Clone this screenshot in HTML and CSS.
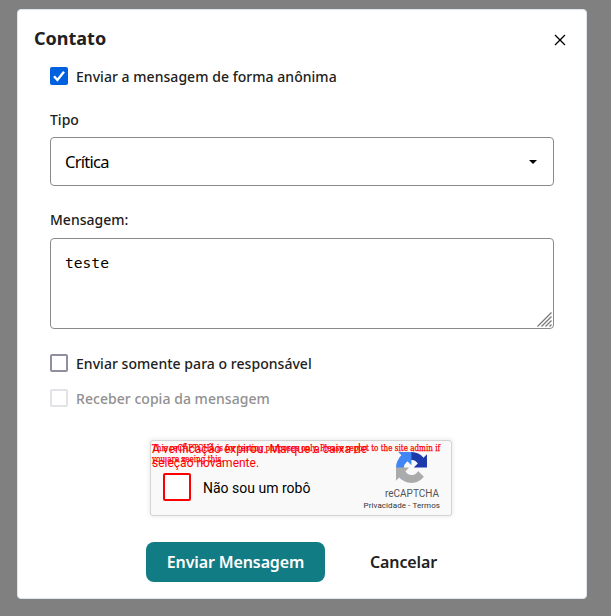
FILE: index.html
```html
<!DOCTYPE html>
<html lang="pt-BR">
<head>
<meta charset="utf-8">
<title>Contato</title>
<link rel="stylesheet" href="styles.css">
</head>
<body>
<main class="modal">
  <header class="head">
    <h1>Contato</h1>
    <button class="close" aria-label="Fechar"><svg width="12" height="12" viewBox="0 0 12 12"><path d="M1 1l10 10M11 1L1 11" stroke="#000" stroke-width="1.4"/></svg></button>
  </header>
  <form class="form">
    <label class="check anon"><span class="box on"><svg width="18" height="18" viewBox="0 0 18 18"><path d="M4 9.300l3.400 3.700L14 4.700" fill="none" stroke="#fff" stroke-width="2.4"/></svg></span><span class="text">Enviar a mensagem de forma anônima</span></label>
    <div class="label tipo">Tipo</div>
    <div class="select"><span>Crítica</span><svg width="8" height="4" viewBox="0 0 8 4"><path d="M0 0h8L4 4z"/></svg></div>
    <div class="label msg">Mensagem:</div>
    <div class="area">teste<svg class="grip" width="15" height="15" viewBox="0 0 15 15"><path d="M.5 14.500l14-14M4.500 14.500l10-10M8.500 14.500l6-6M12.500 14.500l2-2" stroke="#777" stroke-width="1.3"/></svg></div>
    <label class="check resp"><span class="box"></span><span class="text">Enviar somente para o responsável</span></label>
    <label class="check copy"><span class="box"></span><span class="text">Receber copia da mensagem</span></label>
  </form>
  <section class="captcha">
    <div class="testing">This reCAPTCHA is for testing purposes only. Please report to the site admin if<br>you are seeing this.</div>
    <div class="expired">A verificação expirou. Marque a caixa de<br>seleção novamente.</div>
    <div class="robot"><span class="rbox"></span><span class="rtext">Não sou um robô</span></div>
    <div class="brand">
      <svg width="31" height="31" viewBox="0 0 64 64"><path fill="#1c3aa9" d="M64 31.955l-.033-1.370V4.687l-7.160 7.160C50.948 4.674 42.033.093 32.050.093c-10.389 0-19.622 4.960-25.458 12.640l11.736 11.860a15.550 15.550 0 0 1 4.754-5.334c2.050-1.600 4.952-2.906 8.968-2.906.485 0 .86.057 1.135.163 4.976.393 9.288 3.140 11.828 7.124l-8.307 8.307z"/><path fill="#4285f4" d="M31.862.094H4.594l7.160 7.160C4.580 13.147 0 22.060 0 32.046c0 10.388 4.960 19.622 12.640 25.458L24.500 45.768a15.550 15.550 0 0 1-5.334-4.754c-1.600-2.050-2.906-4.952-2.906-8.968 0-.485.057-.86.163-1.135.393-4.976 3.140-9.288 7.124-11.828l8.307 8.307z"/><path fill="#ababab" d="M0 32.045v27.268l7.194-7.160c5.860 7.173 14.774 11.754 24.760 11.754 10.388 0 19.622-4.960 25.458-12.640l-11.736-11.860a15.550 15.550 0 0 1-4.754 5.334c-2.050 1.600-4.952 2.906-8.968 2.906-.485 0-.86-.057-1.135-.163-4.976-.393-9.288-3.140-11.828-7.124l8.307-8.307z"/></svg>
      <div class="name">reCAPTCHA</div>
      <div class="terms">Privacidade&nbsp;-&nbsp;Termos</div>
    </div>
  </section>
  <footer class="actions"><button class="send">Enviar Mensagem</button><button class="cancel">Cancelar</button></footer>
</main>
</body>
</html>
```
FILE: styles.css
```css
* { box-sizing: border-box; }
body { margin: 0; height: 616px; padding: 9px 0 0 17px; overflow: hidden; background: #808080; font-family: "Noto Sans", "Open Sans", sans-serif; color: #212121; }
button { padding: 0; border: 0; background: none; font: inherit; color: inherit; letter-spacing: inherit; }
svg { display: block; }
.modal { width: 570px; height: 590px; border: 1px solid #dee5ec; border-radius: 4px; background: #fff; }
.head { display: flex; justify-content: space-between; align-items: center; height: 58px; padding: 0 20px 0 16px; }
h1 { margin: 0 0 2px; font-size: 18px; line-height: 24px; font-weight: 700; }
.close { margin-top: 2px; }
.form { width: 504px; margin-left: 32px; }
.check { display: flex; align-items: center; gap: 8px; height: 18px; font-size: 14px; line-height: 18px; font-weight: 500; letter-spacing: .04px; white-space: nowrap; }
.text { padding-top: 2px; }
.anon { margin-top: -1px; }
.box { width: 18px; height: 18px; border: 2px solid #8f8f9d; border-radius: 2px; background: #fff; }
.box.on { border: 0; background: #0060df; }
.label { height: 18px; font-size: 14px; line-height: 18px; font-weight: 500; }
.tipo { margin-top: 26px; }
.select { display: flex; align-items: center; justify-content: space-between; height: 49px; margin-top: 8px; padding: 0 16px 0 14px; border: 1px solid #8a8a8a; border-radius: 4px; font-size: 16.5px; color: #000; letter-spacing: -.75px; }
.msg { margin-top: 25px; }
.area { position: relative; height: 91px; margin-top: 9px; padding: 15px 14px; border: 1px solid #8a8a8a; border-radius: 4px; font: 14.6px/18px "DejaVu Sans Mono", monospace; color: #000; }
.grip { position: absolute; right: 1px; bottom: 1px; }
.resp { margin-top: 25px; }
.copy { margin-top: 17px; color: #909090; }
.copy .box { border-color: #e3e3e7; }
.captcha { position: relative; display: flex; justify-content: space-between; width: 302px; height: 76px; margin: 33px 0 0 132px; border: 1px solid #d3d3d3; border-radius: 3px; background: #f9f9f9; box-shadow: 0 0 4px 1px rgba(0,0,0,.08); font-family: Roboto, sans-serif; }
.testing, .expired { position: absolute; left: 1px; color: #f00; white-space: nowrap; }
.testing { top: 2px; font: 9px/11px "DejaVu Serif", serif; font-stretch: condensed; transform: scaleX(.889); transform-origin: 0 0; -webkit-text-stroke: .25px #f00; }
.expired { top: 1px; font-size: 12px; line-height: 14px; }
.robot { display: flex; align-items: center; gap: 12px; height: 28px; margin: 32px 0 0 12px; }
.rbox { width: 28px; height: 28px; border: 2px solid #f00; border-radius: 2px; background: #fff; }
.rtext { padding-top: 2px; font-size: 14px; color: #000; }
.brand { width: 80px; margin: 11px 11px 0 0; display: flex; flex-direction: column; align-items: flex-end; color: #555; white-space: nowrap; }
.brand svg { margin-right: 13px; }
.name { margin: 4px 1px 0 0; font-size: 10px; line-height: 13px; }
.terms { font-size: 8px; line-height: 11px; letter-spacing: .08px; color: #333; }
.actions { display: flex; height: 40px; margin: 26px 0 0 128px; font-size: 16px; font-weight: 600; letter-spacing: -.12px; }
.send { width: 179px; border-radius: 8px; background: #127c84; color: #fff; }
.cancel { width: 67px; margin-left: 45px; }
```
